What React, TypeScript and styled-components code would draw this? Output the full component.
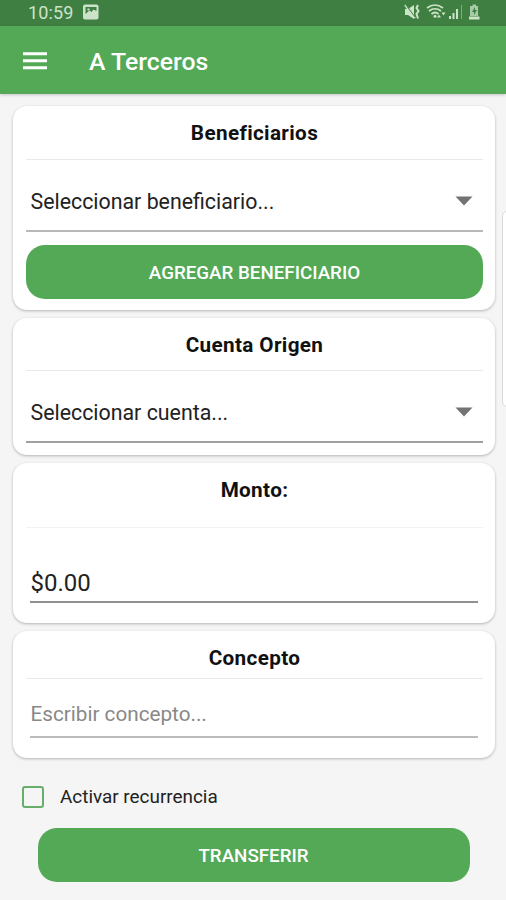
import React from 'react';
import styled, { createGlobalStyle } from 'styled-components';

const green = '#54a957';

const GlobalStyle = createGlobalStyle`
  * { box-sizing: border-box; }
  body { margin: 0; background: #f5f5f5; font-family: Roboto, "Liberation Sans", sans-serif; }
`;

const Screen = styled.div`
  position: relative;
  width: 506px;
  height: 900px;
  overflow: hidden;
  display: flex;
  flex-direction: column;
  background: #f5f5f5;
`;

const StatusBar = styled.header`
  height: 26px;
  flex: none;
  display: flex;
  align-items: center;
  padding: 0 25px 2px 28px;
  background: #3f8042;
  color: #cde3c9;
`;

const Clock = styled.span`
  width: 55px;
  padding-top: 2px;
  font-size: 18px;
  line-height: 24px;
  letter-spacing: 0.15px;
`;

const StatusIcons = styled.div`
  margin-left: auto;
  height: 24px;
  display: flex;
`;

const AppBar = styled.nav`
  height: 68px;
  flex: none;
  display: flex;
  align-items: center;
  gap: 42px;
  padding: 2px 23px 0;
  background: ${green};
  box-shadow: 0 1px 3px rgba(0, 0, 0, 0.2);
`;

const MenuButton = styled.button`
  display: flex;
  padding: 0;
  border: 0;
  background: none;
`;

const AppTitle = styled.h1`
  margin: 0;
  padding-top: 1px;
  color: #fff;
  font-size: 24.8px;
  font-weight: 500;
  line-height: 30px;
`;

const Main = styled.main`
  display: flex;
  flex-direction: column;
  gap: 8px;
  padding: 12px 11px 0 13px;
`;

const Card = styled.section<{ $height: number }>`
  height: ${(p) => p.$height}px;
  padding: 0 12px 0 13px;
  border-radius: 14px;
  background: #fff;
  box-shadow: 0 1px 3px rgba(0, 0, 0, 0.27);
`;

const CardTitle = styled.h2<{ $height: number; $faint?: boolean }>`
  margin: 0;
  height: ${(p) => p.$height}px;
  border-bottom: 1px solid ${(p) => (p.$faint ? '#f3f3f3' : '#e9eaea')};
  color: #111;
  font-size: 20.7px;
  font-weight: 700;
  line-height: 54px;
  letter-spacing: 0.35px;
  text-align: center;
`;

const Select = styled.div<{ $line: string }>`
  height: 72px;
  display: flex;
  justify-content: space-between;
  padding: 12px 10px 0 4.5px;
  border-bottom: 2px solid ${(p) => p.$line};
  color: #222;
  font-size: 21.35px;
  font-weight: 400;
  line-height: 59px;
`;

const Arrow = styled.svg`
  margin-top: 24px;
`;

const Field = styled.input<{ $size: number; $height: number; $line: string; $top: number }>`
  display: block;
  width: calc(100% - 9px);
  height: ${(p) => p.$height}px;
  margin: 0 5px 0 4px;
  padding: ${(p) => p.$top}px 0 0 0.5px;
  border: 0;
  border-bottom: 2px solid ${(p) => p.$line};
  outline: 0;
  background: none;
  color: #222;
  font-family: inherit;
  font-size: ${(p) => p.$size}px;
  &::placeholder { color: #888; }
`;

const ActionButton = styled.button<{ $wide?: boolean }>`
  display: block;
  width: ${(p) => (p.$wide ? '432px' : '100%')};
  height: 54px;
  margin: ${(p) => (p.$wide ? '18.5px 0 0 37.5px' : '13px 0 0')};
  padding: 2px 0 0;
  border: 0;
  border-radius: 19px;
  background: ${green};
  color: #fff;
  font-family: inherit;
  font-size: 18.75px;
  font-weight: 500;
`;

const CheckRow = styled.label`
  height: 26px;
  display: flex;
  align-items: center;
  gap: 16px;
  margin: 25.5px 0 0 22px;
  color: #222;
  font-size: 18.9px;
`;

const CheckBox = styled.span`
  width: 22px;
  height: 22px;
  border: 2px solid #68ae6b;
  border-radius: 3px;
`;

const EdgeHandle = styled.div`
  position: absolute;
  left: 502px;
  top: 211px;
  width: 12px;
  height: 196px;
  border: 1px solid #d9d9d9;
  border-radius: 5px;
  background: #fff;
`;

const PictureIcon = () => (
  <svg width="16" height="16" viewBox="0 0 16 16">
    <rect x="0" y="0.5" width="15.500" height="15" rx="2" fill="#cde3c9" />
    <path d="M2.500 10V3H13.500V7L10.500 5.500 8.500 8 6.500 6.500z" fill="#3f8042" />
    <path d="M4.500 4.500h2v2h-2z" fill="#cde3c9" />
  </svg>
);

const SystemIcons = () => (
  <svg width="77" height="24" viewBox="404 0 77 24" fill="#cde3c9">
    <path d="M405 9h3l6-4v14l-6-4h-3z" />
    <path d="M405 5l10 13M418 5l-1.500 3 2 3-2 3 1.500 4.500" fill="none" stroke="#cde3c9" strokeWidth="2" />
    <path d="M406 5l9 12" stroke="#3f8042" strokeWidth="1" />
    <path d="M427 8q8-6 16 0M429 11q6-4.500 12 0M431.500 14q3.500-3 7 0" fill="none" stroke="#cde3c9" strokeWidth="1.700" />
    <circle cx="435" cy="16.300" r="1.500" />
    <path d="M437 17.500h4l-2-3zM441.500 12.500h4l-2 3z" />
    <path d="M449 16h2v3h-2zM452.500 13h2v6h-2zM456 9h2v10h-2z" />
    <path d="M461 5h1v14h-1z" opacity="0.45" />
    <path d="M472.500 4.500h3.500V6h2v10h-8V6h2.500z" opacity="0.75" />
    <path d="M469 16.500h10.500v3H469z" />
    <path d="M475 7l-3 5h2v3l3-5h-2z" fill="#3f8042" />
  </svg>
);

const DropArrow = () => (
  <Arrow width="18" height="10" viewBox="0 0 18 10">
    <path d="M0.500 0.500h17L9 9.500z" fill="#737373" />
  </Arrow>
);

export default function App() {
  return (
    <Screen>
      <GlobalStyle />
      <StatusBar>
        <Clock>10:59</Clock>
        <PictureIcon />
        <StatusIcons><SystemIcons /></StatusIcons>
      </StatusBar>
      <AppBar>
        <MenuButton aria-label="Menú">
          <svg width="24" height="18" viewBox="0 0 24 18">
            <path d="M0 1.700h24M0 8.700h24M0 15.700h24" stroke="#fff" strokeWidth="2.900" />
          </svg>
        </MenuButton>
        <AppTitle>A Terceros</AppTitle>
      </AppBar>
      <Main>
        <Card $height={204}>
          <CardTitle $height={54}>Beneficiarios</CardTitle>
          <Select $line="#b9b9b9">Seleccionar beneficiario...<DropArrow /></Select>
          <ActionButton>AGREGAR BENEFICIARIO</ActionButton>
        </Card>
        <Card $height={137}>
          <CardTitle $height={53}>Cuenta Origen</CardTitle>
          <Select $line="#a0a0a0">Seleccionar cuenta...<DropArrow /></Select>
        </Card>
        <Card $height={160}>
          <CardTitle $height={65} $faint>Monto:</CardTitle>
          <Field $size={24} $height={75} $top={36} $line="#909090" defaultValue="$0.00" />
        </Card>
        <Card $height={127}>
          <CardTitle $height={48}>Concepto</CardTitle>
          <Field $size={20.7} $height={59} $top={12} $line="#bcbcbc" placeholder="Escribir concepto..." />
        </Card>
      </Main>
      <CheckRow><CheckBox />Activar recurrencia</CheckRow>
      <ActionButton $wide>TRANSFERIR</ActionButton>
      <EdgeHandle />
    </Screen>
  );
}
